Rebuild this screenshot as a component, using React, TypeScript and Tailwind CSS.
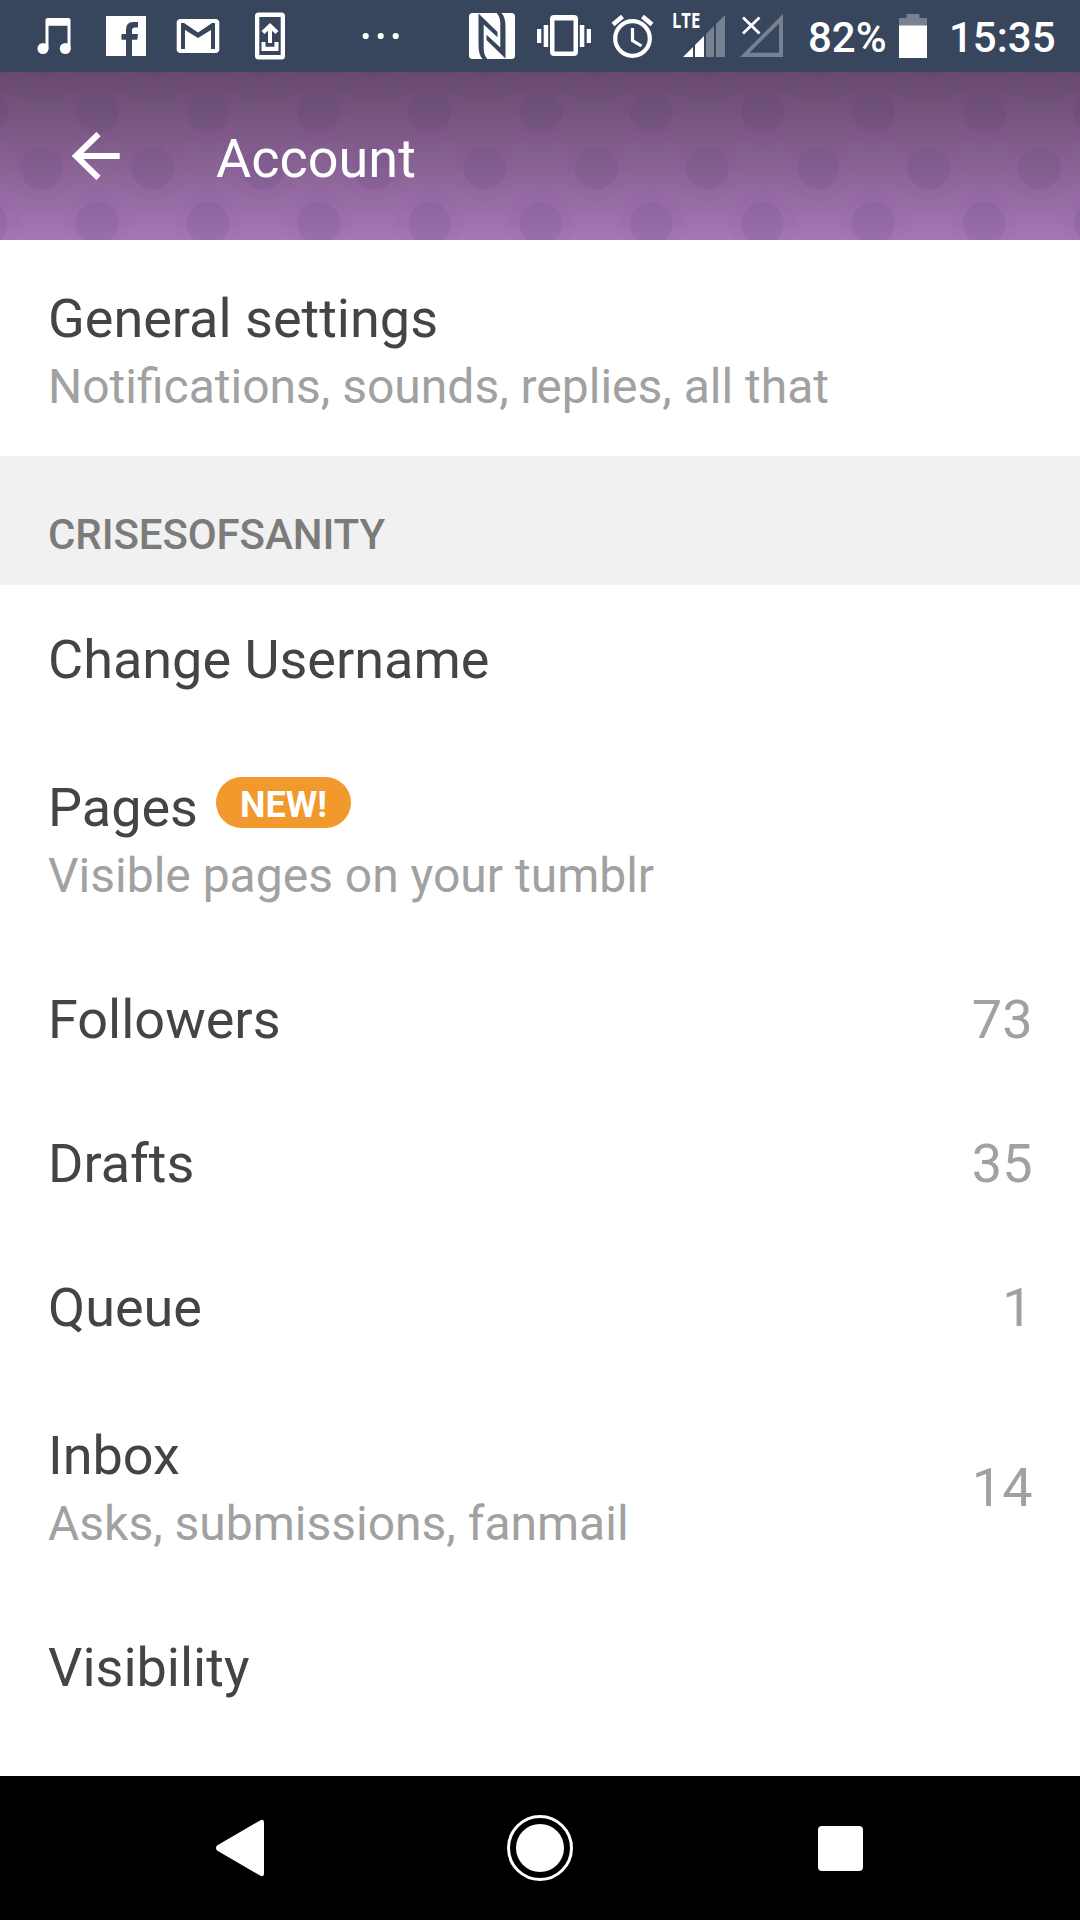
import React from "react";

type GlyphProps = { box: string; className: string; children: React.ReactNode };

function Glyph({ box, className, children }: GlyphProps) {
  return (
    <svg viewBox={box} className={`h-[72px] shrink-0 ${className}`} fill="#fff">
      {children}
    </svg>
  );
}

const nfcStroke = "M478.500 13.500L497.500 32v5.300L483.700 24.500V49q0 6 4 10.500H483q-4.500-4-4.500-14z";

function StatusBar() {
  return (
    <div className="flex h-[72px] items-center bg-[#37465d] text-[42px] font-medium leading-[72px] text-white">
      <Glyph box="36 0 36 72" className="ml-[36px] w-[36px]">
        <path d="M45.5 20q0-2 2-2h21q2 0 2 2v29h-3V25.700H48.500V49h-3z" />
        <circle cx="43" cy="48.500" r="5.500" />
        <circle cx="65.300" cy="48.500" r="5.500" />
      </Glyph>
      <Glyph box="106 0 40 72" className="ml-[34px] w-[40px]">
        <path d="M106 16h40v40h-14V39.800h5.300l.7-5.800h-6v-3.500q0-3 3-3H138v-5.500h-5q-7 0-7 7.500V34h-4.500v5.800H126V56h-20z" />
      </Glyph>
      <Glyph box="176 0 44 72" className="ml-[30px] w-[44px]">
        <rect x="176.700" y="19" width="42.600" height="34" rx="4" />
        <path d="M181 49V23h3l14 9.500L212 23h3v26h-4V30l-13 8-13-8v19z" fill="#37465d" />
      </Glyph>
      <Glyph box="255 0 30 72" className="ml-[35px] w-[30px]">
        <path fillRule="evenodd" d="M258.500 12.500h23q3.500 0 3.500 3.500v40q0 3.500-3.500 3.500h-23q-3.500 0-3.500-3.500V16q0-3.500 3.500-3.500zM259.300 17v38h21.400V17z" />
        <path d="M270 23l8.500 8-3 3-3.500-3.300V43h-4V30.700L264.500 34l-3-3zM261.500 42h4v4.700h9V42h4v9h-17z" />
      </Glyph>
      <Glyph box="362 0 38 72" className="ml-[77px] w-[38px]">
        <circle cx="365.700" cy="36" r="3.100" />
        <circle cx="380.700" cy="36" r="3.100" />
        <circle cx="395.700" cy="36" r="3.100" />
      </Glyph>
      <Glyph box="469 0 46 72" className="ml-[69px] w-[46px]">
        <rect x="469" y="13" width="46" height="46" rx="3.500" />
        <path d={nfcStroke} fill="#37465d" />
        <path d={nfcStroke} fill="#37465d" transform="rotate(180 492 36)" />
      </Glyph>
      <Glyph box="537 0 54 72" className="ml-[22px] w-[54px]">
        <path fillRule="evenodd" d="M554 15h20q4 0 4 4v33q0 4-4 4h-20q-4 0-4-4V19q0-4 4-4zm.5 5.500v31h19v-31z" />
        <path d="M537 29h4.300v14H537zM543.700 25h4.500v22h-4.500zM579.800 25h4.500v22h-4.500zM586.700 29h4.300v14h-4.300z" />
      </Glyph>
      <Glyph box="611 0 43 72" className="ml-[20px] w-[43px]">
        <g fill="none" stroke="#fff">
          <circle cx="632.500" cy="38.500" r="17.300" strokeWidth="4.200" />
          <path d="M632.500 28v12.500l9 5.500" strokeWidth="3.200" />
          <path d="M613 24.500l9.500-8M652 24.500l-9.500-8" strokeWidth="4.600" />
        </g>
      </Glyph>
      <div className="relative ml-[18px] h-[72px] w-[54px]">
        <svg viewBox="672 0 54 72" className="h-[72px] w-[54px]" fill="#fff">
          <path d="M683 57l10-10v10zM695 57V45l9-9v21z" />
          <path d="M706 57V34l8-8v31zM716 57V24l9-9v42z" fill="#778191" />
        </svg>
        <span className="absolute top-[10px] left-0 origin-left scale-x-[.79] font-['Open_Sans'] text-[21px] leading-[21px] font-bold">LTE</span>
      </div>
      <Glyph box="740 0 43 72" className="ml-[14px] w-[43px]">
        <path fillRule="evenodd" d="M740 57l43-43v43zM749.500 52.700H779V23.500z" fill="#778191" />
        <path d="M743 17.500l16.500 16M759.500 17.500L743 33.500" stroke="#fff" strokeWidth="2.800" />
      </Glyph>
      <span className="ml-[25px] w-[80px] pt-[3px]">82%</span>
      <Glyph box="899 0 28 72" className="ml-[11px] w-[28px]">
        <path d="M899 26v-8h7.500v-4h13v4h7.500v8z" fill="#778191" />
        <path d="M899 25.500h28V58h-28z" />
      </Glyph>
      <span className="ml-[22px] pt-[3px]">15:35</span>
    </div>
  );
}

function AppBar() {
  return (
    <header className="relative h-[168px] bg-linear-to-b from-[#664a6c] to-[#a577b6]">
      <svg className="absolute inset-0 h-full w-full" viewBox="0 72 1080 168">
        <defs>
          <pattern id="dots" patternUnits="userSpaceOnUse" x="41.600" y="57" width="110.900" height="111">
            <g fill="#9b3f9b" fillOpacity=".05">
              <circle cx="55.450" cy="55.500" r="33" />
              <circle cx="0" cy="0" r="33" />
              <circle cx="110.900" cy="0" r="33" />
              <circle cx="0" cy="111" r="33" />
              <circle cx="110.900" cy="111" r="33" />
            </g>
            <g fill="#3c3c64" fillOpacity=".1">
              <circle cx="55.450" cy="55.500" r="21.500" />
              <circle cx="0" cy="0" r="21.500" />
              <circle cx="110.900" cy="0" r="21.500" />
              <circle cx="0" cy="111" r="21.500" />
              <circle cx="110.900" cy="111" r="21.500" />
            </g>
          </pattern>
        </defs>
        <rect y="72" width="1080" height="168" fill="url(#dots)" />
      </svg>
      <div className="relative flex h-full items-center">
        <svg viewBox="72 132 48 48" className="ml-[72px] h-[48px] w-[48px]">
          <path d="M119.700 156H76M98.500 134L76 156l22.500 22" fill="none" stroke="#fff" strokeWidth="6" />
        </svg>
        <h1 className="mt-[5px] ml-[96px] text-[54px] leading-[63px] text-white">Account</h1>
      </div>
    </header>
  );
}

type RowProps = { title: string; note?: string; value?: string; badge?: string };

function Row({ title, note, value, badge }: RowProps) {
  return (
    <div className={`flex items-center justify-between px-12 ${note ? "h-[216px] pt-[9px]" : "h-[144px] pt-[5px]"}`}>
      <div>
        <div className="flex text-[54px] leading-[68px] text-[#444]">
          {title}
          {badge && (
            <span className="mt-[3px] ml-[18px] h-[51px] rounded-full bg-[#f2992e] px-6 text-[36px] leading-[56px] font-bold text-white">
              {badge}
            </span>
          )}
        </div>
        {note && <div className="text-[48px] leading-[68px] text-[#a1a1a1]">{note}</div>}
      </div>
      {value && <span className={`-mr-[0.5px] text-[54px] text-[#a1a1a1] ${note ? "-mt-1" : ""}`}>{value}</span>}
    </div>
  );
}

const blogRows: RowProps[] = [
  { title: "Change Username" },
  { title: "Pages", note: "Visible pages on your tumblr", badge: "NEW!" },
  { title: "Followers", value: "73" },
  { title: "Drafts", value: "35" },
  { title: "Queue", value: "1" },
  { title: "Inbox", note: "Asks, submissions, fanmail", value: "14" },
  { title: "Visibility" },
];

function NavBar() {
  return (
    <nav className="flex h-[144px] items-center bg-black">
      <svg viewBox="216 1818 48 60" className="ml-[216px] h-[60px] w-[48px]" fill="#fff">
        <path d="M217 1845.500L260 1820.500q4-2 4 2v51q0 4-4 2L217 1850.500q-2-2.500 0-5z" />
      </svg>
      <svg viewBox="0 0 66 66" className="ml-[243px] h-[66px] w-[66px]" fill="#fff">
        <circle cx="33" cy="33" r="24" />
        <circle cx="33" cy="33" r="31.500" fill="none" stroke="#fff" strokeWidth="3" />
      </svg>
      <span className="ml-[244.500px] h-[45px] w-[45px] rounded-[4px] bg-white" />
    </nav>
  );
}

export default function App() {
  return (
    <div className="flex h-[1920px] w-[1080px] flex-col overflow-hidden bg-white font-[Roboto,sans-serif]">
      <StatusBar />
      <AppBar />
      <main className="flex-1">
        <Row title="General settings" note="Notifications, sounds, replies, all that" />
        <h2 className="h-[129px] bg-[#f1f1f1] px-12 pt-[54px] text-[42px] leading-[49px] font-medium tracking-[-0.1px] text-[#7b7b7b]">
          CRISESOFSANITY
        </h2>
        {blogRows.map((row) => (
          <Row key={row.title} {...row} />
        ))}
      </main>
      <NavBar />
    </div>
  );
}
